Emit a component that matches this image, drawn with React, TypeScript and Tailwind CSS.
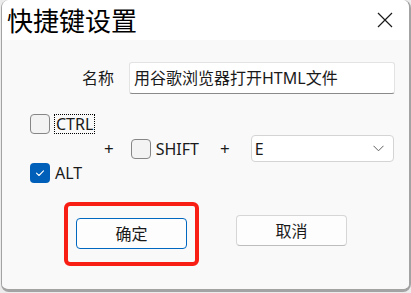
import React from "react";

function CheckBox({ checked }: { checked?: boolean }) {
  return checked ? (
    <span className="flex h-5 w-5 shrink-0 items-center justify-center rounded-[4px] bg-[#005fb8]">
      <svg width="12" height="12" viewBox="0 0 12 12" fill="none">
        <path d="M2.5 6.2 L5 8.5 L9.5 3.8" stroke="#ffffff" strokeWidth="1.1" strokeLinecap="round" strokeLinejoin="round" />
      </svg>
    </span>
  ) : (
    <span className="block h-5 w-5 shrink-0 rounded-[4px] border border-[#868686] bg-[#f3f3f3]" />
  );
}

export default function App() {
  const font = "font-['Noto_Sans','Noto_Sans_CJK_SC',sans-serif]";

  return (
    <div className={`h-[293px] w-[411px] bg-[#ececec] ${font} text-[#1a1a1a]`}>
      <div className="ml-px flex h-[292px] w-[410px] flex-col overflow-hidden rounded-[8px] border-b-[3px] border-l border-r-2 border-[#a3a3a3]">
        {/* Title bar */}
        <div className="flex h-[40px] shrink-0 items-center justify-between bg-white pl-[5px] pr-[16px]">
          <span className="font-['Noto_Sans_CJK_SC',sans-serif] text-[26px] leading-none text-black">快捷键设置</span>
          <svg width="16" height="16" viewBox="0 0 16 16" fill="none">
            <path d="M1 1 L15 15 M15 1 L1 15" stroke="#1a1a1a" strokeWidth="1.2" />
          </svg>
        </div>

        {/* Body */}
        <div className="flex flex-1 flex-col bg-[#f9f9f9]">
          {/* Name */}
          <div className="mt-[22px] flex items-center pl-[80px]">
            <span className="w-[32px] text-[16px] leading-none">名称</span>
            <div className="ml-[15px] flex h-[32px] w-[266px] items-center rounded-[3px] border border-[#e3e3e3] border-b-[#8a8a8a] bg-white pl-[4px] text-[16px] leading-none">
              用谷歌浏览器打开HTML文件
            </div>
          </div>

          {/* Modifiers */}
          <div className="mt-[20px] flex items-center pl-[28px]">
            <div className="flex w-[74px] flex-col gap-[29px]">
              <div className="flex items-center gap-[4px]">
                <CheckBox />
                <span className="border border-dotted border-black px-px text-[16px] leading-[18px]">CTRL</span>
              </div>
              <div className="flex items-center gap-[5px]">
                <CheckBox checked />
                <span className="text-[16px] leading-[18px]">ALT</span>
              </div>
            </div>
            <span className="text-[17px] leading-none">+</span>
            <div className="ml-[17px] flex items-center gap-[5px]">
              <CheckBox />
              <span className="text-[16px] leading-[18px]">SHIFT</span>
            </div>
            <span className="ml-[21px] text-[17px] leading-none">+</span>
            <div className="ml-[21px] flex h-[27px] w-[143px] items-center justify-between rounded-[4px] border border-[#d4d4d4] bg-white pl-[3px] pr-[9px] text-[16px] leading-none">
              <span>E</span>
              <svg width="11" height="7" viewBox="0 0 11 7" fill="none">
                <path d="M0.5 0.8 L5.5 5.8 L10.5 0.8" stroke="#5f5f5f" strokeWidth="1" />
              </svg>
            </div>
          </div>

          {/* Buttons */}
          <div className="mt-[19px] flex items-start pl-[62px]">
            <div className="rounded-[6px] border-4 border-[#f81e14] px-[8px] pb-[13px] pt-[12px]">
              <button className="flex h-[31px] w-[111px] items-center justify-center rounded-[4px] border border-[#0067c0] bg-[#fdfdfd] text-[16px] leading-none">
                确定
              </button>
            </div>
            <button className="ml-[37px] mt-[13px] flex h-[31px] w-[111px] items-center justify-center rounded-[4px] border border-[#d6d6d6] border-b-[#bdbdbd] bg-[#fdfdfd] text-[16px] leading-none">
              取消
            </button>
          </div>
        </div>
      </div>
    </div>
  );
}
